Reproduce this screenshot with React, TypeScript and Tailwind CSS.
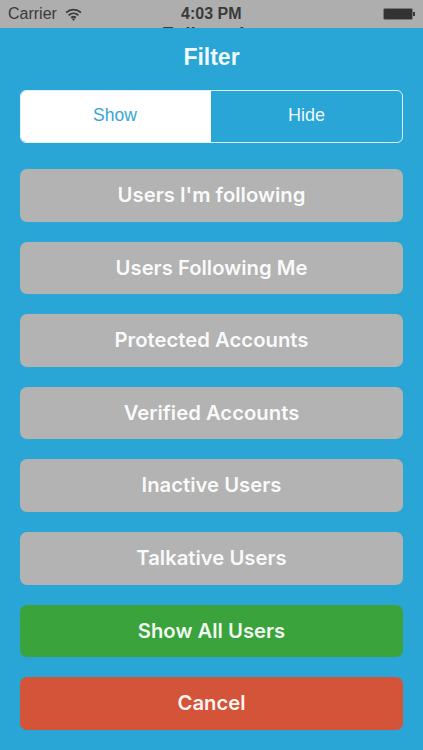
const FILTERS = [
  "Users I'm following",
  "Users Following Me",
  "Protected Accounts",
  "Verified Accounts",
  "Inactive Users",
  "Talkative Users",
];

function FilterButton({ label, color }: { label: string; color: string }) {
  return (
    <button className={`h-[52.6px] w-full rounded-[7px] font-['Inter',sans-serif] text-[20.3px] font-semibold text-white/95 ${color}`}>
      {label}
    </button>
  );
}

export default function App() {
  return (
    <div className="flex h-[750px] w-[423px] flex-col overflow-hidden bg-[#29a5d6] font-['Liberation_Sans',sans-serif]">
      {/* Status bar */}
      <div className="relative flex h-[28px] shrink-0 items-center justify-between overflow-hidden bg-[#aeaeae] pl-2 pr-[8px] text-[#3a3a3a]">
        <div className="flex items-center gap-[8px]">
          <span className="text-[16px]">Carrier</span>
          <svg width="17" height="13" viewBox="0 0 16 12" fill="none" stroke="#3a3a3a" strokeWidth="1.7">
            <path d="M1 4.2C5 .6 11 .6 15 4.2" />
            <path d="M3.4 6.7c2.7-2.3 6.5-2.3 9.2 0" />
            <path d="M5.8 9c1.3-1 3.1-1 4.4 0" />
            <path d="M8 12l-1.6-1.9c1-.6 2.2-.6 3.2 0z" fill="#3a3a3a" stroke="none" />
          </svg>
        </div>
        <span className="absolute left-[181px] top-[4px] text-[16px] font-bold leading-[20px]">4:03 PM</span>
        <span className="absolute left-[162px] top-[24px] text-[19px] font-bold leading-[20px]">Followed</span>
        <div className="flex items-center">
          <div className="h-[12px] w-[30px] rounded-[2px] border border-[#777777] bg-[#333333]" />
          <div className="h-[4px] w-[2px] bg-[#3a3a3a]" />
        </div>
      </div>

      {/* Filter sheet */}
      <div className="flex flex-1 flex-col px-5">
        <h1 className="mt-[15px] text-center text-[23px] leading-[28px] font-bold text-white/95">Filter</h1>

        <div className="mt-[19px] flex h-[53px] overflow-hidden rounded-[6px] border-[1.5px] border-[#d8f3fb]">
          <div className="flex w-[190px] items-center justify-center bg-white pb-[2px] pr-[2px] text-[17.5px] text-[#36a6d6]">Show</div>
          <div className="flex flex-1 items-center justify-center pb-[2px] text-[18px] text-white/95">Hide</div>
        </div>

        <div className="mt-[26px] flex flex-col gap-[20px]">
          {FILTERS.map((f) => (
            <FilterButton key={f} label={f} color="bg-[#b3b3b3]" />
          ))}
          <FilterButton label="Show All Users" color="bg-[#3aa33c]" />
          <FilterButton label="Cancel" color="bg-[#d35438]" />
        </div>
      </div>
    </div>
  );
}
